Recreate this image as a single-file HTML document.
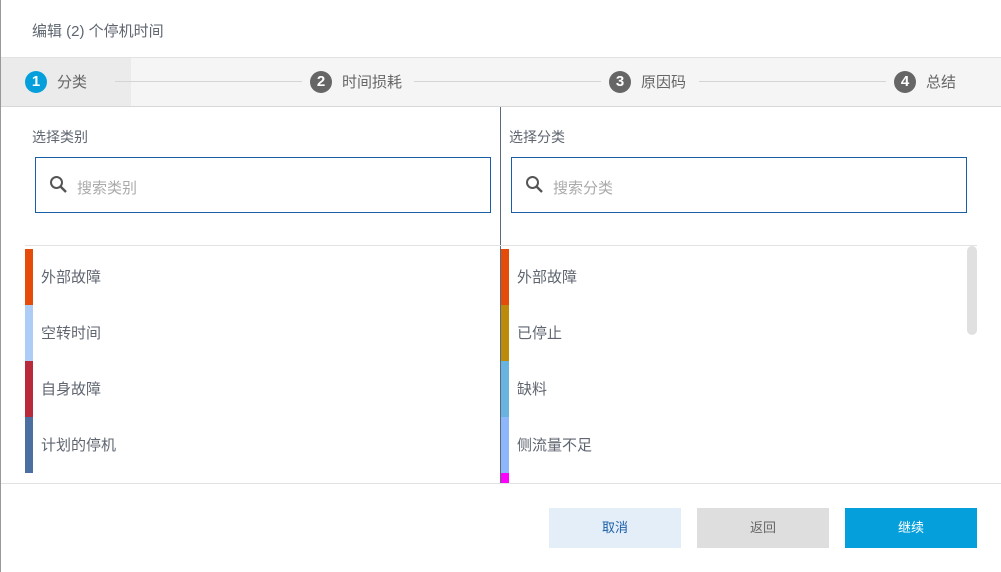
<!DOCTYPE html>
<html><head><meta charset="utf-8"><style>
*{margin:0;padding:0;box-sizing:border-box}
body{width:1001px;height:572px;overflow:hidden;background:#fff;font-family:"Liberation Sans","Noto Sans CJK SC",sans-serif;color:#5f6670;position:relative}
.a{position:absolute}
.c{width:22px;height:22px;border-radius:50%;background:#666;color:#fff;font-weight:bold;font-size:15px;text-align:center;line-height:22px}
.st{font-size:15px;color:#666;line-height:22px}
.ln{height:1px;background:#d4d4d4;top:81px}
.lab{font-size:14px;color:#5f6670}
.box{border:1px solid #1a5ea8;height:56px}
.ph{font-size:15px;color:#aaa}
.it{font-size:15px;color:#5f6670;line-height:56px;height:56px}
.btn{top:508px;width:132px;height:40px;line-height:40px;text-align:center;font-size:13px}
</style></head><body>
<div class="a" style="left:0;top:0;width:1px;height:572px;background:#999"></div>
<div class="a" style="left:32px;top:20px;font-size:15px;color:#5f6670">编辑 (2) 个停机时间</div>
<div class="a" style="left:1px;top:57px;width:1000px;height:50px;background:#f5f5f5;border-top:1px solid #e2e2e2;border-bottom:1px solid #d8d8d8"></div>
<div class="a" style="left:1px;top:58px;width:130px;height:48px;background:#ebebeb"></div>
<div class="a c" style="left:25px;top:71px;background:#05a0dc">1</div>
<div class="a st" style="left:57px;top:72px">分类</div>
<div class="a ln" style="left:115px;width:187px"></div>
<div class="a c" style="left:310px;top:71px">2</div>
<div class="a st" style="left:342px;top:72px">时间损耗</div>
<div class="a ln" style="left:414px;width:187px"></div>
<div class="a c" style="left:609px;top:71px">3</div>
<div class="a st" style="left:641px;top:72px">原因码</div>
<div class="a ln" style="left:699px;width:187px"></div>
<div class="a c" style="left:894px;top:71px">4</div>
<div class="a st" style="left:926px;top:72px">总结</div>
<div class="a" style="left:500px;top:107px;width:1px;height:376px;background:#5a6a7a"></div>
<div class="a lab" style="left:32px;top:127px">选择类别</div>
<div class="a lab" style="left:509px;top:127px">选择分类</div>
<div class="a box" style="left:35px;top:157px;width:456px"></div>
<div class="a box" style="left:511px;top:157px;width:456px"></div>
<svg class="a" style="left:49px;top:175px" width="20" height="20" viewBox="0 0 20 20"><circle cx="7.5" cy="7.5" r="5.5" fill="none" stroke="#555" stroke-width="2"/><path d="M11.5 11.5L17 17" stroke="#555" stroke-width="2.4"/></svg>
<svg class="a" style="left:525px;top:175px" width="20" height="20" viewBox="0 0 20 20"><circle cx="7.5" cy="7.5" r="5.5" fill="none" stroke="#555" stroke-width="2"/><path d="M11.5 11.5L17 17" stroke="#555" stroke-width="2.4"/></svg>
<div class="a ph" style="left:77px;top:177px">搜索类别</div>
<div class="a ph" style="left:553px;top:177px">搜索分类</div>
<div class="a" style="left:25px;top:245px;width:952px;height:1px;background:#e2e2e2"></div>
<div class="a" style="left:25px;top:249px;width:8px;height:56px;background:#e54c0a"></div>
<div class="a" style="left:25px;top:305px;width:8px;height:56px;background:#adcdf6"></div>
<div class="a" style="left:25px;top:361px;width:8px;height:56px;background:#b8293a"></div>
<div class="a" style="left:25px;top:417px;width:8px;height:56px;background:#4b6fa0"></div>
<div class="a it" style="left:41px;top:250px">外部故障</div>
<div class="a it" style="left:41px;top:306px">空转时间</div>
<div class="a it" style="left:41px;top:362px">自身故障</div>
<div class="a it" style="left:41px;top:418px">计划的停机</div>
<div class="a" style="left:501px;top:249px;width:8px;height:56px;background:#e54c0a"></div>
<div class="a" style="left:501px;top:305px;width:8px;height:56px;background:#bd8a0a"></div>
<div class="a" style="left:501px;top:361px;width:8px;height:56px;background:#68b3e0"></div>
<div class="a" style="left:501px;top:417px;width:8px;height:56px;background:#8eb6fa"></div>
<div class="a" style="left:501px;top:473px;width:8px;height:10px;background:#f0f"></div>
<div class="a it" style="left:517px;top:250px">外部故障</div>
<div class="a it" style="left:517px;top:306px">已停止</div>
<div class="a it" style="left:517px;top:362px">缺料</div>
<div class="a it" style="left:517px;top:418px">侧流量不足</div>
<div class="a" style="left:967px;top:246px;width:10px;height:89px;border-radius:5px;background:#e0e0e0"></div>
<div class="a" style="left:1px;top:483px;width:1000px;height:1px;background:#e2e2e2"></div>
<div class="a btn" style="left:549px;background:#e3eef8;color:#1a5ea8">取消</div>
<div class="a btn" style="left:697px;background:#dedede;color:#666">返回</div>
<div class="a btn" style="left:845px;background:#05a0dc;color:#fff">继续</div>
</body></html>
